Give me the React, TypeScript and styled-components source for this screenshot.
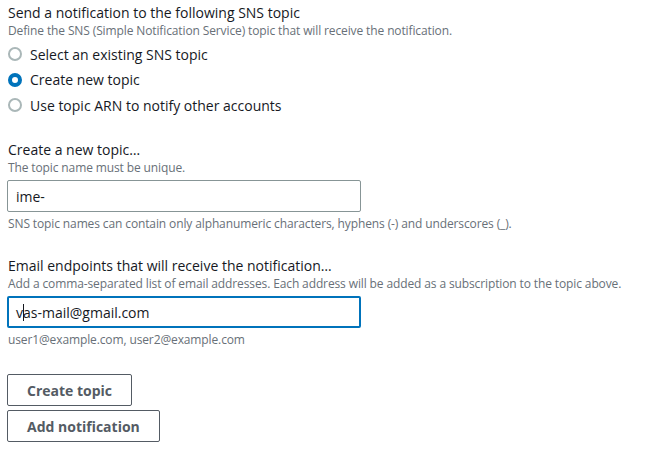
import React from "react";
import styled, { createGlobalStyle } from "styled-components";

const Global = createGlobalStyle`
  html, body { margin: 0; padding: 0; background: #ffffff; }
  body { font-family: "Open Sans", "Liberation Sans", Arial, sans-serif; color: #16191f; }
`;

const Page = styled.div`
  display: flex;
  flex-direction: column;
  padding: 3px 8px 0 8px;
`;

const Section = styled.section<{ $mt?: number }>`
  display: flex;
  flex-direction: column;
  margin-top: ${(p) => p.$mt ?? 0}px;
`;

const Title = styled.div`
  font-size: 14px;
  line-height: 20px;
  color: #16191f;
`;

const Desc = styled.div`
  font-size: 12px;
  line-height: 16px;
  color: #687078;
  white-space: nowrap;
  letter-spacing: -0.12px;
`;

const RadioList = styled.div`
  display: flex;
  flex-direction: column;
  gap: 5.5px;
  margin-top: 5px;
`;

const RadioRow = styled.label`
  display: flex;
  align-items: center;
  gap: 8px;
  height: 20px;
  font-size: 14px;
  color: #16191f;
`;

const RadioDot = styled.span<{ $checked?: boolean }>`
  box-sizing: border-box;
  width: 14px;
  height: 14px;
  border-radius: 50%;
  flex: none;
  border: ${(p) => (p.$checked ? "4px solid #0073bb" : "2px solid #aab7b8")};
  background: #ffffff;
`;

const Input = styled.div<{ $focused?: boolean }>`
  box-sizing: border-box;
  width: 354px;
  height: 32px;
  margin-top: 4px;
  margin-left: -1px;
  display: flex;
  align-items: center;
  padding-left: ${(p) => (p.$focused ? 7 : 8)}px;
  border: ${(p) => (p.$focused ? "2px solid #0073bb" : "1px solid #879596")};
  border-radius: 2px;
  font-size: 14px;
  color: #16191f;
`;

const Caret = styled.span`
  display: inline-block;
  width: 1px;
  height: 17px;
  background: #16191f;
  margin: 0 -1px 0 0;
`;

const Hint = styled.div`
  font-size: 12px;
  line-height: 16px;
  color: #687078;
  margin-top: 4px;
  letter-spacing: -0.12px;
`;

const Buttons = styled.div`
  display: flex;
  flex-direction: column;
  align-items: flex-start;
  gap: 4px;
  margin-top: 26px;
  margin-left: -1px;
`;

const Button = styled.button`
  box-sizing: border-box;
  height: 32px;
  padding: 0 19px;
  background: #ffffff;
  border: 1px solid #545b64;
  border-radius: 2px;
  font-family: inherit;
  font-size: 14px;
  font-weight: 700;
  color: #545b64;
  cursor: pointer;
`;

export default function App() {
  return (
    <>
      <Global />
      <Page>
        <Section>
          <Title>Send a notification to the following SNS topic</Title>
          <Desc>Define the SNS (Simple Notification Service) topic that will receive the notification.</Desc>
          <RadioList>
            <RadioRow><RadioDot />Select an existing SNS topic</RadioRow>
            <RadioRow><RadioDot $checked />Create new topic</RadioRow>
            <RadioRow><RadioDot />Use topic ARN to notify other accounts</RadioRow>
          </RadioList>
        </Section>
        <Section $mt={25}>
          <Title>Create a new topic…</Title>
          <Desc>The topic name must be unique.</Desc>
          <Input>ime-</Input>
          <Hint>SNS topic names can contain only alphanumeric characters, hyphens (-) and underscores (_).</Hint>
        </Section>
        <Section $mt={24}>
          <Title>Email endpoints that will receive the notification…</Title>
          <Desc>Add a comma-separated list of email addresses. Each address will be added as a subscription to the topic above.</Desc>
          <Input $focused>v<Caret />as-mail@gmail.com</Input>
          <Hint>user1@example.com, user2@example.com</Hint>
        </Section>
        <Buttons>
          <Button>Create topic</Button>
          <Button>Add notification</Button>
        </Buttons>
      </Page>
    </>
  );
}
